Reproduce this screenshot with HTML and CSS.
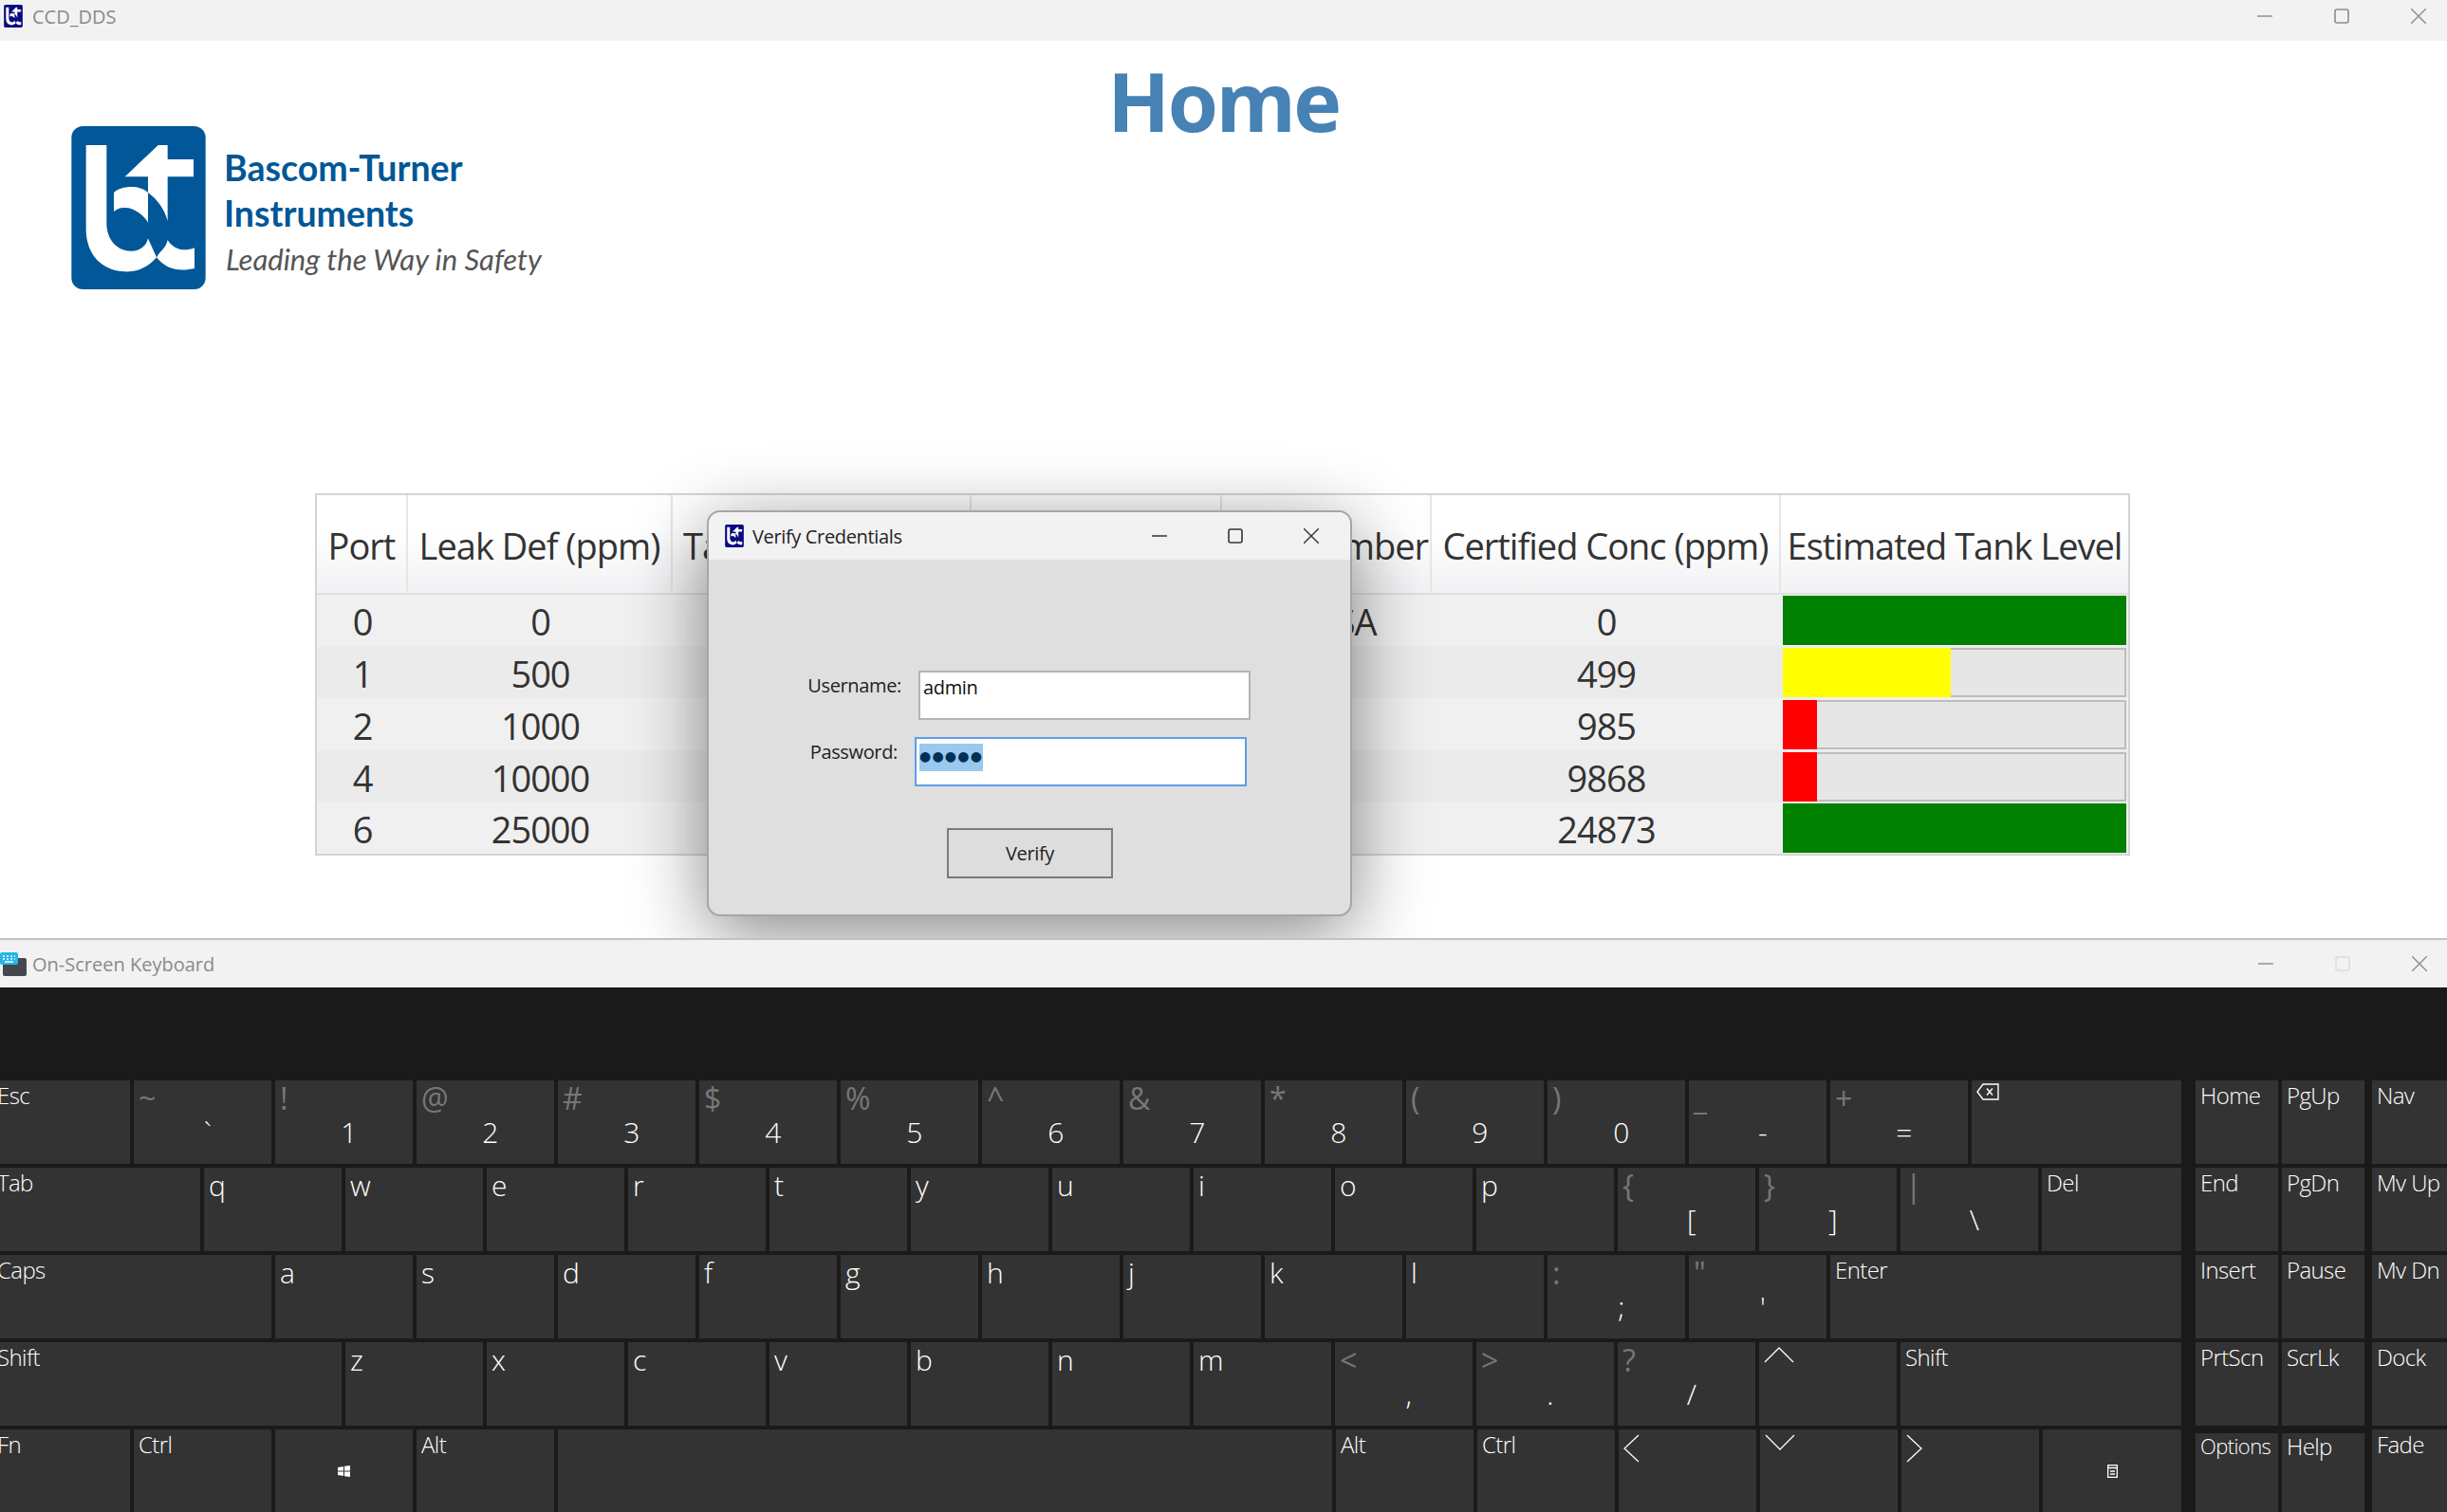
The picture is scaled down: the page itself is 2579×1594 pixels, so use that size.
FILE: index.html
```html
<!DOCTYPE html>
<html lang="en">
<head>
    <meta charset="UTF-8">
    <title>CCD_DDS</title>
    <link rel="stylesheet" href="styles.css">
</head>
<body>
    <svg class="defs" width="0" height="0">
        <symbol id="bt-mark" viewBox="46 40 424 516">
            <rect x="46" y="40" width="424" height="516" rx="36" fill="currentColor"/>
            <g fill="#fff">
                <path d="M92 100H157V345C157 400 190 435 235 435C262 435 282 420 288 395L315 455C285 490 250 502 215 500C140 497 92 445 92 365Z"/>
                <path d="M180 250C205 228 260 225 288 250V345C275 320 240 295 210 298C200 298 190 302 180 310Z"/>
                <path d="M215 200L320 100H350V145H432V200H350V340C340 300 315 270 288 250V200Z"/>
                <path d="M315 455C330 430 345 425 350 400C365 425 395 440 435 425V490C390 500 345 495 315 455Z"/>
            </g>
        </symbol>
        <symbol id="ic-min" viewBox="0 0 16 16"><path d="M0 8H16" stroke="currentColor" stroke-width="1.4"/></symbol>
        <symbol id="ic-max" viewBox="0 0 16 16"><rect x="1" y="1" width="14" height="14" rx="2" fill="none" stroke="currentColor" stroke-width="1.6"/></symbol>
        <symbol id="ic-close" viewBox="0 0 16 16"><path d="M0 0L16 16M16 0L0 16" stroke="currentColor" stroke-width="1.4"/></symbol>
    </svg>

    <div class="app-window">
        <div class="titlebar">
            <svg class="app-icon"><use href="#bt-mark"/></svg>
            <span class="title-text">CCD_DDS</span>
            <div class="controls">
                <span class="ctl"><svg><use href="#ic-min"/></svg></span>
                <span class="ctl"><svg><use href="#ic-max"/></svg></span>
                <span class="ctl"><svg><use href="#ic-close"/></svg></span>
            </div>
        </div>

        <h1>Home</h1>

        <div class="brand">
            <svg class="brand-mark"><use href="#bt-mark"/></svg>
            <div class="brand-text">
                <div class="brand-name">Bascom-Turner</div>
                <div class="brand-name">Instruments</div>
                <div class="brand-tag">Leading the Way in Safety</div>
            </div>
        </div>

        <table class="ports">
            <colgroup>
                <col class="c-port"><col class="c-leak"><col class="c-tank"><col class="c-date"><col class="c-num"><col class="c-conc"><col class="c-level">
            </colgroup>
            <thead>
                <tr>
                    <th>Port</th>
                    <th>Leak Def (ppm)</th>
                    <th class="start">Tank Type</th>
                    <th></th>
                    <th class="lot-head">Lot Number</th>
                    <th>Certified Conc (ppm)</th>
                    <th>Estimated Tank Level</th>
                </tr>
            </thead>
            <tbody>
                <tr>
                    <td>0</td><td>0</td><td></td><td></td><td class="lot">MSA</td><td>0</td>
                    <td class="level"><div class="bar"><div class="fill green" style="width:100%"></div></div></td>
                </tr>
                <tr>
                    <td>1</td><td>500</td><td></td><td></td><td></td><td>499</td>
                    <td class="level"><div class="bar"><div class="fill yellow" style="width:49.5%"></div></div></td>
                </tr>
                <tr>
                    <td>2</td><td>1000</td><td></td><td></td><td></td><td>985</td>
                    <td class="level"><div class="bar"><div class="fill red" style="width:10%"></div></div></td>
                </tr>
                <tr>
                    <td>4</td><td>10000</td><td></td><td></td><td></td><td>9868</td>
                    <td class="level"><div class="bar"><div class="fill red" style="width:10%"></div></div></td>
                </tr>
                <tr>
                    <td>6</td><td>25000</td><td></td><td></td><td></td><td>24873</td>
                    <td class="level"><div class="bar"><div class="fill green" style="width:100%"></div></div></td>
                </tr>
            </tbody>
        </table>

        <!-- dialog floats over the table -->
        <div class="dialog">
            <div class="dialog-bar">
                <svg class="app-icon"><use href="#bt-mark"/></svg>
                <span class="dialog-title">Verify Credentials</span>
                <div class="controls">
                    <span class="ctl"><svg><use href="#ic-min"/></svg></span>
                    <span class="ctl"><svg><use href="#ic-max"/></svg></span>
                    <span class="ctl"><svg><use href="#ic-close"/></svg></span>
                </div>
            </div>
            <div class="dialog-body">
                <div class="form-row">
                    <label class="user-label">Username:</label>
                    <div class="field">admin</div>
                </div>
                <div class="form-row pass-row">
                    <label class="pass-label">Password:</label>
                    <div class="field focused"><span class="sel">●●●●●</span></div>
                </div>
                <button class="verify" type="button">Verify</button>
            </div>
        </div>
    </div>

    <div class="osk">
        <div class="osk-bar">
            <svg class="osk-icon" viewBox="0 0 28 25">
                <rect x="3" y="6" width="25" height="19" rx="2" fill="#44474d"/>
                <rect x="0" y="0" width="19" height="13" rx="2" fill="#27b6e6"/>
                <path d="M3 4h2M7 4h2M11 4h2M15 4h1M3 7h2M7 7h2M11 7h2M15 7h1M5 10h9" stroke="#fff" stroke-width="1.4"/>
            </svg>
            <span class="title-text">On-Screen Keyboard</span>
            <div class="controls">
                <span class="ctl"><svg><use href="#ic-min"/></svg></span>
                <span class="ctl off"><svg><use href="#ic-max"/></svg></span>
                <span class="ctl"><svg><use href="#ic-close"/></svg></span>
            </div>
        </div>

        <div class="keys">
            <div class="keys-main">
                <div class="key-row">
                    <div class="key">Esc</div>
                    <div class="key"><span class="sym">~</span><span class="low">`</span></div>
                    <div class="key"><span class="sym">!</span><span class="low">1</span></div>
                    <div class="key"><span class="sym">@</span><span class="low">2</span></div>
                    <div class="key"><span class="sym">#</span><span class="low">3</span></div>
                    <div class="key"><span class="sym">$</span><span class="low">4</span></div>
                    <div class="key"><span class="sym">%</span><span class="low">5</span></div>
                    <div class="key"><span class="sym">^</span><span class="low">6</span></div>
                    <div class="key"><span class="sym">&amp;</span><span class="low">7</span></div>
                    <div class="key"><span class="sym">*</span><span class="low">8</span></div>
                    <div class="key"><span class="sym">(</span><span class="low">9</span></div>
                    <div class="key"><span class="sym">)</span><span class="low">0</span></div>
                    <div class="key"><span class="sym">_</span><span class="low">-</span></div>
                    <div class="key"><span class="sym">+</span><span class="low">=</span></div>
                    <div class="key grow">
                        <svg class="back-icon" viewBox="0 0 24 18"><path d="M7 1H23V17H7L1 9ZM11 5.500L17 12.500M17 5.500L11 12.500" fill="none" stroke="#fff" stroke-width="1.400"/></svg>
                    </div>
                </div>
                <div class="key-row">
                    <div class="key w15">Tab</div>
                    <div class="key ltr">q</div>
                    <div class="key ltr">w</div>
                    <div class="key ltr">e</div>
                    <div class="key ltr">r</div>
                    <div class="key ltr">t</div>
                    <div class="key ltr">y</div>
                    <div class="key ltr">u</div>
                    <div class="key ltr">i</div>
                    <div class="key ltr">o</div>
                    <div class="key ltr">p</div>
                    <div class="key"><span class="sym">{</span><span class="low">[</span></div>
                    <div class="key"><span class="sym">}</span><span class="low">]</span></div>
                    <div class="key"><span class="sym">|</span><span class="low">\</span></div>
                    <div class="key grow">Del</div>
                </div>
                <div class="key-row">
                    <div class="key w2">Caps</div>
                    <div class="key ltr">a</div>
                    <div class="key ltr">s</div>
                    <div class="key ltr">d</div>
                    <div class="key ltr">f</div>
                    <div class="key ltr">g</div>
                    <div class="key ltr">h</div>
                    <div class="key ltr">j</div>
                    <div class="key ltr">k</div>
                    <div class="key ltr">l</div>
                    <div class="key"><span class="sym">:</span><span class="low">;</span></div>
                    <div class="key"><span class="sym">"</span><span class="low">'</span></div>
                    <div class="key grow">Enter</div>
                </div>
                <div class="key-row">
                    <div class="key w25">Shift</div>
                    <div class="key ltr">z</div>
                    <div class="key ltr">x</div>
                    <div class="key ltr">c</div>
                    <div class="key ltr">v</div>
                    <div class="key ltr">b</div>
                    <div class="key ltr">n</div>
                    <div class="key ltr">m</div>
                    <div class="key"><span class="sym">&lt;</span><span class="low">,</span></div>
                    <div class="key"><span class="sym">&gt;</span><span class="low">.</span></div>
                    <div class="key"><span class="sym">?</span><span class="low">/</span></div>
                    <div class="key">
                        <svg class="chev-h" viewBox="0 0 32 17"><path d="M1 16L16 1L31 16" fill="none" stroke="#fff" stroke-width="1.300"/></svg>
                    </div>
                    <div class="key grow">Shift</div>
                </div>
                <div class="key-row">
                    <div class="key">Fn</div>
                    <div class="key">Ctrl</div>
                    <div class="key icon-key">
                        <svg class="win-icon" viewBox="0 0 13 12"><path d="M0 2L6 1V5.500H0ZM7 .800L13 0V5.500H7ZM0 6.500H6V11L0 10ZM7 6.500H13V12L7 11.200Z" fill="#fff"/></svg>
                    </div>
                    <div class="key">Alt</div>
                    <div class="key space"></div>
                    <div class="key">Alt</div>
                    <div class="key">Ctrl</div>
                    <div class="key">
                        <svg class="chev-v" viewBox="0 0 17 30"><path d="M16 1L1 15L16 29" fill="none" stroke="#fff" stroke-width="1.300"/></svg>
                    </div>
                    <div class="key">
                        <svg class="chev-h" viewBox="0 0 32 17"><path d="M1 1L16 16L31 1" fill="none" stroke="#fff" stroke-width="1.300"/></svg>
                    </div>
                    <div class="key">
                        <svg class="chev-v" viewBox="0 0 17 30"><path d="M1 1L16 15L1 29" fill="none" stroke="#fff" stroke-width="1.300"/></svg>
                    </div>
                    <div class="key grow icon-key">
                        <svg class="menu-icon" viewBox="0 0 11 14"><path d="M.700 .700H10.300V13.300H.700ZM.700 3.500H10.300M3 7H8M3 10H8" fill="none" stroke="#fff" stroke-width="1.300"/></svg>
                    </div>
                </div>
            </div>

            <div class="keys-side">
                <div class="side-col">
                    <div class="key">Home</div>
                    <div class="key">End</div>
                    <div class="key">Insert</div>
                    <div class="key">PrtScn</div>
                    <div class="key small inset">Options</div>
                </div>
                <div class="side-col">
                    <div class="key">PgUp</div>
                    <div class="key">PgDn</div>
                    <div class="key">Pause</div>
                    <div class="key">ScrLk</div>
                    <div class="key inset">Help</div>
                </div>
                <div class="side-col last">
                    <div class="key">Nav</div>
                    <div class="key">Mv Up</div>
                    <div class="key">Mv Dn</div>
                    <div class="key">Dock</div>
                    <div class="key">Fade</div>
                </div>
            </div>
        </div>
    </div>
</body>
</html>
```

FILE: styles.css
```css
html, body {
    margin: 0;
    padding: 0;
}
body {
    width: 2579px;
    height: 1594px;
    overflow: hidden;
    display: flex;
    flex-direction: column;
    font-family: 'Open Sans', 'Noto Sans', sans-serif;
    background-color: #fff;
}
.defs {
    position: absolute;
}

/* main window */
.app-window {
    position: relative;
    height: 989px;
    flex: none;
}
.titlebar, .osk-bar, .dialog-bar {
    display: flex;
    align-items: center;
    background-color: #f2f2f2;
}
.titlebar {
    height: 34px;
    padding: 0 0 9px 4px;
}
.app-icon {
    width: 20px;
    height: 24px;
    color: #0a0a80;
    flex: none;
}
.title-text {
    margin-left: 10px;
    font-size: 20px;
    color: #8a8a8a;
}
.controls {
    display: flex;
    margin-left: auto;
    color: #8c8c8c;
}
.titlebar .controls {
    margin-right: -10px;
}
.ctl {
    width: 81px;
    display: flex;
    justify-content: center;
}
.ctl svg {
    width: 16px;
    height: 16px;
}
.ctl.off {
    color: #dcdcdc;
}

h1 {
    margin: 0;
    height: 90px;
    line-height: 126px;
    font-size: 86px;
    font-weight: 700;
    letter-spacing: -2.5px;
    text-align: center;
    color: #4682b4;
}

/* logo */
.brand {
    display: flex;
    gap: 19px;
    height: 172px;
    margin-left: 75px;
}
.brand-mark {
    width: 142px;
    height: 172px;
    color: #015797;
    flex: none;
}
.brand-text {
    padding-top: 20px;
    font-family: 'Lato', sans-serif;
}
.brand-name {
    height: 48px;
    line-height: 48px;
    font-size: 37.5px;
    font-weight: 700;
    color: #015797;
}
.brand-tag {
    height: 48px;
    line-height: 48px;
    margin-left: 2px;
    font-size: 31px;
    font-style: italic;
    color: #555;
}

/* port table */
.ports {
    margin: 215px 0 0 332px;
    width: 1913px;
    table-layout: fixed;
    border-collapse: separate;
    border-spacing: 0;
    border: 2px solid #d4d4d4;
    color: #333;
    font-size: 38px;
    letter-spacing: -1px;
}
.c-port { width: 96px; }
.c-leak { width: 279px; }
.c-tank { width: 315px; }
.c-date { width: 264px; }
.c-num { width: 221px; }
.c-conc { width: 368px; }
.c-level { width: 366px; }
.ports th {
    height: 105px;
    padding: 2px 0 0;
    font-weight: 400;
    white-space: nowrap;
    overflow: hidden;
    background: linear-gradient(#fff 35%, #f1f2f4);
    border-right: 2px solid #e6e6e6;
    border-bottom: 2px solid #dedede;
    box-sizing: border-box;
}
.ports th:last-child {
    border-right: none;
}
.ports th.start {
    text-align: left;
    padding-left: 11px;
}
.ports th.lot-head {
    padding-left: 12px;
}
.ports td {
    height: 55px;
    padding: 2px 0 0;
    box-sizing: border-box;
    line-height: 50px;
    text-align: center;
    background-color: #f0f0f0;
}
.ports tr:nth-child(even) td {
    background-color: #ebebeb;
}
.ports tr:first-child td, .ports tr:last-child td {
    height: 54px;
}
.ports td.lot {
    padding-left: 28px;
}
.ports td.level {
    padding: 0 2px 0 2px;
}
.bar {
    height: 52px;
    box-sizing: border-box;
    border: 2px solid #bdbdbd;
    background-color: #e6e6e6;
}
.fill {
    height: 52px;
    margin: -2px 0 0 -2px;
}
.green { background-color: #008000; min-width: calc(100% + 4px); }
.yellow { background-color: #ffff00; }
.red { background-color: #ff0000; }

/* verify dialog */
.dialog {
    position: absolute;
    left: 745px;
    top: 538px;
    width: 680px;
    height: 428px;
    box-sizing: border-box;
    border: 2px solid #a6a6a6;
    border-radius: 14px;
    background-color: #dfdfdf;
    box-shadow: 0 18px 80px rgba(0, 0, 0, 0.48);
    overflow: hidden;
    color: #222;
    font-size: 20px;
    letter-spacing: -0.35px;
}
.dialog-bar {
    height: 50px;
    padding-left: 17px;
}
.dialog-title {
    margin-left: 9px;
}
.dialog .controls {
    margin-right: 1px;
    color: #333;
}
.dialog .ctl {
    width: 80px;
}
.dialog-body {
    padding-top: 117px;
}
.form-row {
    display: flex;
    height: 52px;
    margin-bottom: 18px;
}
.pass-row {
    margin-left: -4px;
}
.form-row label {
    width: 203px;
    margin-right: 18px;
    text-align: right;
    line-height: 32px;
}
.field {
    width: 350px;
    box-sizing: border-box;
    border: 2px solid #b4b4b4;
    background-color: #fff;
    padding: 1px 3px;
    line-height: 30px;
    color: #111;
}
.focused {
    border-color: #5c9fe6;
}
.sel {
    display: inline-block;
    height: 29px;
    line-height: 27px;
    background-color: #99c9ef;
    color: #003054;
    font-family: 'DejaVu Sans', sans-serif;
    font-size: 14px;
    letter-spacing: 1.2px;
    white-space: nowrap;
}
.verify {
    display: block;
    width: 175px;
    height: 53px;
    margin: 44px 0 0 251px;
    border: 2px solid #7b7b7b;
    background-color: #dddddd;
    font: inherit;
    letter-spacing: inherit;
    color: #222;
}

/* on-screen keyboard */
.osk {
    position: relative;
    z-index: 2;
    flex: 1;
    display: flex;
    flex-direction: column;
    background-color: #1a1a1a;
    border-top: 2px solid #c2c2c2;
}
.osk-bar {
    height: 50px;
    flex: none;
}
.osk-icon {
    width: 28px;
    height: 25px;
    flex: none;
}
.osk-bar .title-text {
    margin-left: 6px;
}
.osk-bar .controls {
    margin-right: -11px;
}
.keys {
    display: flex;
    padding-top: 98px;
    margin-left: -8px;
    color: #fff;
}
.keys-main {
    width: 2307px;
    flex: none;
    display: grid;
    grid-auto-rows: 88px;
    row-gap: 4px;
}
.key-row {
    display: flex;
    gap: 4px;
}
.key {
    position: relative;
    width: 145px;
    height: 88px;
    flex: none;
    box-sizing: border-box;
    padding: 0 5px;
    background-color: #333;
    font-size: 24px;
    font-weight: 300;
    letter-spacing: -0.6px;
    line-height: 32px;
    display: flex;
    flex-direction: column;
}
.w15 { width: 219px; }
.w2 { width: 294px; }
.w25 { width: 368px; }
.space { width: 816px; }
.grow { flex: 1; width: auto; }
.ltr {
    font-size: 30px;
    line-height: 38px;
}
.sym {
    height: 35px;
    font-size: 32px;
    font-weight: 400;
    line-height: 38px;
    color: #777;
}
.low {
    padding-left: 10px;
    text-align: center;
    font-size: 30px;
    line-height: 40px;
}
.icon-key {
    align-items: center;
    justify-content: center;
}
.back-icon { width: 24px; height: 18px; margin-top: 3px; }
.chev-h { width: 32px; height: 17px; margin-top: 5px; }
.chev-v { width: 17px; height: 30px; margin-top: 5px; }
.win-icon { width: 13px; height: 12px; }
.menu-icon { width: 11px; height: 14px; }

.keys-side {
    display: flex;
    flex: none;
    margin-left: 15px;
    gap: 4px;
}
.side-col {
    display: flex;
    flex-direction: column;
    gap: 4px;
}
.side-col .key {
    width: 87px;
}
.side-col.last {
    margin-left: 4px;
}
.side-col.last .key {
    width: 100px;
}
.inset {
    margin-top: 4px;
    line-height: 27px;
}
.small {
    font-size: 22px;
}
```
